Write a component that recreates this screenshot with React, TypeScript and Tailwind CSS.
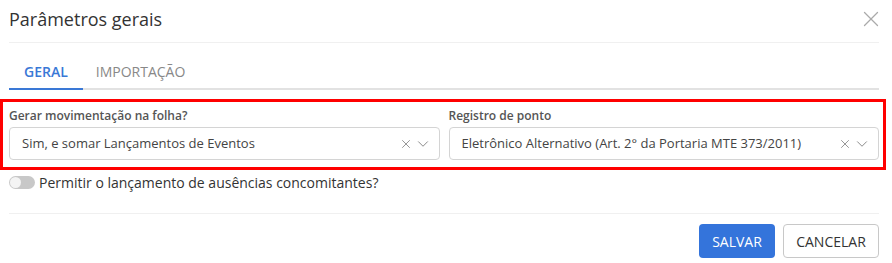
import React from "react";
import { X, ChevronDown } from "lucide-react";

function SelectBox({ value }: { value: string }) {
  return (
    <div className="flex h-[33px] items-center rounded-[4px] border border-[#d4d4d4] bg-white pl-[12px] pr-[7px]">
      <span className="flex-1 truncate text-[13px] text-[#444]">{value}</span>
      <X className="h-[14px] w-[14px] text-[#888]" strokeWidth={1.5} />
      <ChevronDown className="ml-[1px] h-[18px] w-[18px] text-[#888]" strokeWidth={1.3} />
    </div>
  );
}

export default function App() {
  const fields = [
    { label: "Gerar movimentação na folha?", value: "Sim, e somar Lançamentos de Eventos" },
    { label: "Registro de ponto", value: "Eletrônico Alternativo (Art. 2° da Portaria MTE 373/2011)" },
  ];

  return (
    <div className="relative h-[263px] w-[892px] bg-white font-['Open_Sans',sans-serif] text-[#333]">
      <div className="ml-[9px] mr-[13px]">
        {/* Header */}
        <div className="flex h-[43px] items-center justify-between border-b border-[#f0f0f0] pb-[4px]">
          <h2 className="text-[18px] text-[#333]">Parâmetros gerais</h2>
          <X className="-mr-[5px] h-[26px] w-[26px] text-[#aaa]" strokeWidth={1.2} />
        </div>

        {/* Tabs */}
        <div className="mt-[12px] flex border-b-2 border-[#e2e2e2]">
          <div className="-mb-[2px] flex h-[35px] items-center border-b-2 border-[#3a78d6] px-[15px] text-[14px] font-semibold text-[#3a78d6]">
            GERAL
          </div>
          <div className="flex h-[33px] items-center px-[13px] text-[14px] text-[#888]">IMPORTAÇÃO</div>
        </div>

        {/* Fields */}
        <div className="mt-[17px] grid grid-cols-2 gap-[9px]">
          {fields.map((f) => (
            <div key={f.label}>
              <div className="mb-[2px] h-[18px] text-[12px] leading-[18px] font-semibold text-[#555]">{f.label}</div>
              <SelectBox value={f.value} />
            </div>
          ))}
        </div>

        {/* Toggle */}
        <div className="mt-[12px] flex h-[20px] items-center gap-[4px]">
          <div className="flex h-[13px] w-[26px] items-center rounded-full bg-[#c8c8c8] px-[1px]">
            <div className="h-[11px] w-[11px] rounded-full bg-[#f4f4f4]" />
          </div>
          <span className="text-[14px] text-[#333]">Permitir o lançamento de ausências concomitantes?</span>
        </div>

        {/* Footer */}
        <div className="mt-[21px] flex justify-end gap-[8px] border-t border-[#f0f0f0] pt-[10px]">
          <button className="h-[34px] w-[76px] rounded-[4px] bg-[#3474db] text-[14px] text-white">SALVAR</button>
          <button className="h-[34px] w-[96px] rounded-[4px] border border-[#c8c8c8] bg-white text-[14px] text-[#333]">
            CANCELAR
          </button>
        </div>
      </div>

      {/* annotation box */}
      <div className="pointer-events-none absolute left-0 top-[99px] h-[71px] w-[886px] border-[3px] border-[#ff0000]" />
    </div>
  );
}
